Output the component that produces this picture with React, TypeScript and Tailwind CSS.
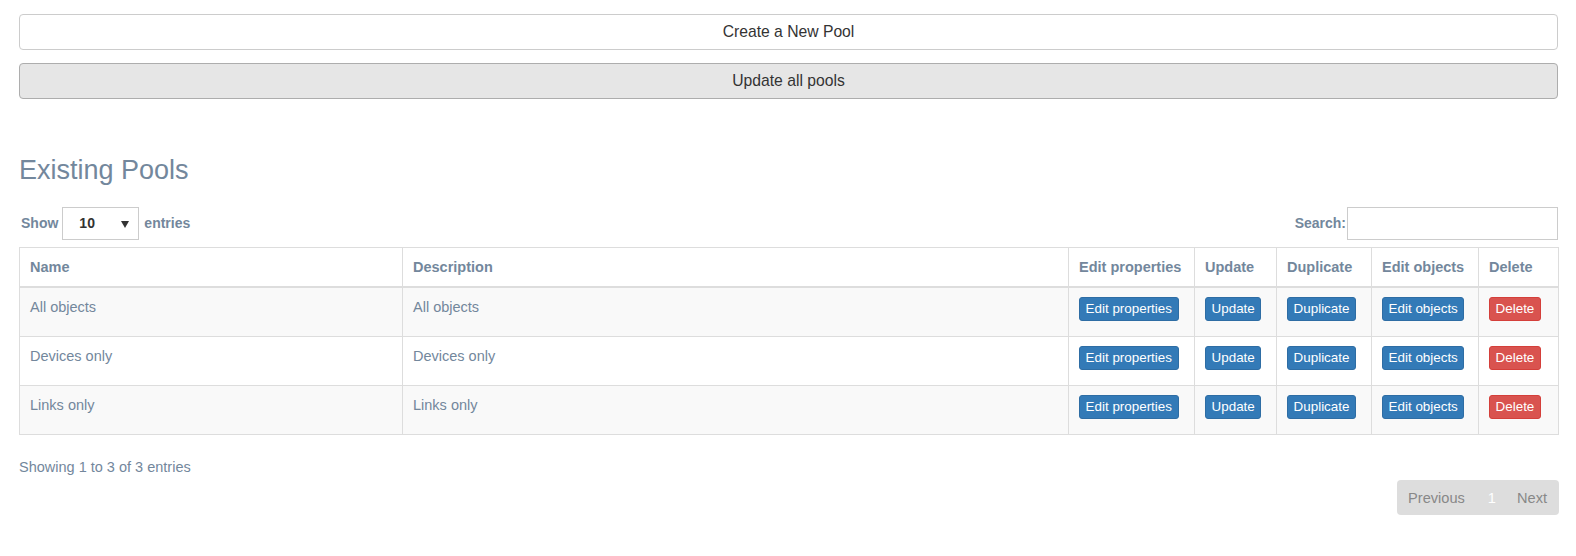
import React from "react"

const pools = [
  { name: "All objects", description: "All objects" },
  { name: "Devices only", description: "Devices only" },
  { name: "Links only", description: "Links only" },
]

const columns = [
  { label: "Name", width: "w-[383px]" },
  { label: "Description", width: "w-[666px]" },
  { label: "Edit properties", width: "w-[126px]" },
  { label: "Update", width: "w-[82px]" },
  { label: "Duplicate", width: "w-[95px]" },
  { label: "Edit objects", width: "w-[107px]" },
  { label: "Delete", width: "w-[80px]" },
]

function XsButton({ label, danger }: { label: string; danger?: boolean }) {
  return (
    <button
      className={`inline-block align-top mb-[5px] px-[5.6px] py-[1px] text-[13.4px] leading-[20px] text-white rounded-[3px] border ${
        danger ? "bg-[#d9534f] border-[#d43f3a]" : "bg-[#337ab7] border-[#2e6da4]"
      }`}
    >
      {label}
    </button>
  )
}

export default function App() {
  return (
    <div className="pl-[19px] pr-[18px] pt-[14px] pb-[20px] bg-white text-[#73879C] text-[14.5px] leading-[20.7px] font-['Liberation_Sans',Arial,sans-serif]">
      {/* Top actions */}
      <button className="block w-full h-[36px] bg-white border border-[#cccccc] rounded-[4px] text-[#333333] text-[15.7px]">
        Create a New Pool
      </button>
      <button className="block w-full h-[36px] mt-[13px] bg-[#e6e6e6] border border-[#adadad] rounded-[4px] text-[#333333] text-[15.7px]">
        Update all pools
      </button>

      <h2 className="mt-[56px] text-[27px] leading-[30px] font-normal">Existing Pools</h2>

      {/* Length + search */}
      <div className="flex items-center justify-between mt-[22px] pl-[2px]">
        <div className="flex items-center font-bold text-[14px]">
          <span>Show</span>
          <div className="ml-[4px] mr-[5px] w-[77px] h-[33px] border border-[#cccccc] flex items-center justify-between pl-[16px] pr-[9px] text-[#333333] text-[14px]">
            <span>10</span>
            <svg width="8" height="8" viewBox="0 0 8 8">
              <path d="M0 1 L8 1 L4 8 Z" fill="#333333" />
            </svg>
          </div>
          <span>entries</span>
        </div>
        <div className="flex items-center font-bold text-[14px]">
          <span className="mr-[1px]">Search:</span>
          <div className="w-[211px] h-[33px] border border-[#cccccc] bg-white" />
        </div>
      </div>

      {/* Table */}
      <table className="mt-[7px] w-full table-fixed border-collapse border border-[#dddddd]">
        <thead>
          <tr>
            {columns.map((c) => (
              <th
                key={c.label}
                className={`${c.width} text-left font-bold pt-[9px] pb-[8px] px-[10px] border border-[#dddddd] border-b-2`}
              >
                {c.label}
              </th>
            ))}
          </tr>
        </thead>
        <tbody>
          {pools.map((p, i) => (
            <tr key={p.name} className={i % 2 === 0 ? "bg-[#f9f9f9]" : "bg-white"}>
              <td className="align-top pt-[9px] pb-[10px] px-[10px] border border-[#dddddd]">{p.name}</td>
              <td className="align-top pt-[9px] pb-[10px] px-[10px] border border-[#dddddd]">{p.description}</td>
              <td className="align-top pt-[9px] pb-[10px] px-[10px] border border-[#dddddd]">
                <XsButton label="Edit properties" />
              </td>
              <td className="align-top pt-[9px] pb-[10px] px-[10px] border border-[#dddddd]">
                <XsButton label="Update" />
              </td>
              <td className="align-top pt-[9px] pb-[10px] px-[10px] border border-[#dddddd]">
                <XsButton label="Duplicate" />
              </td>
              <td className="align-top pt-[9px] pb-[10px] px-[10px] border border-[#dddddd]">
                <XsButton label="Edit objects" />
              </td>
              <td className="align-top pt-[9px] pb-[10px] px-[10px] border border-[#dddddd]">
                <XsButton label="Delete" danger />
              </td>
            </tr>
          ))}
        </tbody>
      </table>

      <div className="mt-[22px]">Showing 1 to 3 of 3 entries</div>

      <div className="flex justify-end mt-[3px] -mr-[1px]">
        <div className="flex items-center h-[35px] bg-[#dddddd] rounded-[4px] text-[14.6px] text-[#888888]">
          <span className="px-[11px]">Previous</span>
          <span className="px-[12px] text-white">1</span>
          <span className="pl-[9px] pr-[12px]">Next</span>
        </div>
      </div>
    </div>
  )
}
